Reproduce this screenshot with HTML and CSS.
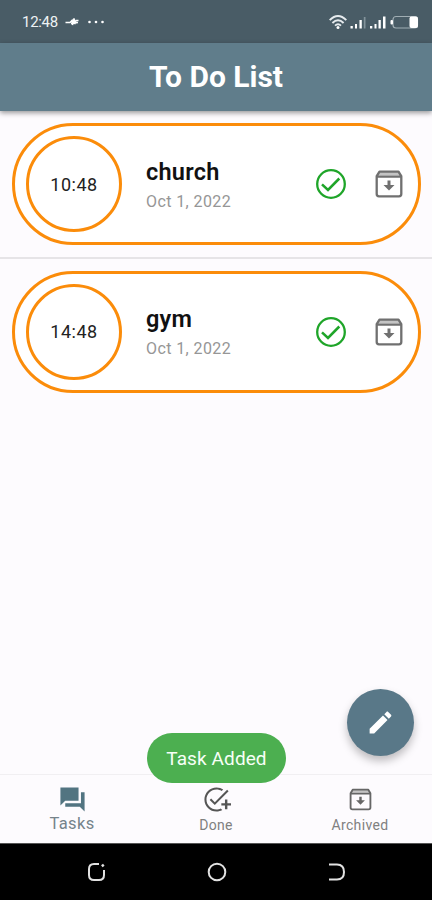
FILE: index.html
```html
<!DOCTYPE html>
<html lang="en">
<head>
<meta charset="utf-8">
<title>To Do List</title>
<link rel="stylesheet" href="styles.css">
</head>
<body>
<svg class="defs" width="0" height="0">
  <symbol id="archive" viewBox="0 0 36 36"><path fill="#c4c4c4" d="M8.500 5.500h19l2.800 4H5.700z"/><path fill="none" stroke="currentColor" stroke-width="2.300" stroke-linejoin="round" d="M5.700 10.200L8.500 5.700h19l2.800 4.500V28q0 2.300-2.300 2.300H8q-2.300 0-2.300-2.300zM5.700 10.700h24.600"/><path fill="currentColor" d="M16.500 14.500h3v4.500h4L18 24.500 12.500 19h4z"/></symbol>
  <symbol id="check" viewBox="0 0 36 36"><circle cx="18" cy="18" r="13.800" fill="none" stroke="currentColor" stroke-width="2.300"/><path fill="none" stroke="currentColor" stroke-width="2.500" d="M9 18.300l6 5.700L26.300 12.500"/></symbol>
</svg>
<div class="phone">
  <div class="status">
    <span class="clock">12:48</span>
    <svg class="pulse" width="15" height="14" viewBox="0 0 15 14"><path d="M0.500 7.500H5L7 5.500 7.500 10 9 3.500 10 9 11 5.500 13.500 5.500M6 8.500L13 7.500"/></svg>
    <svg class="dots" width="16" height="4" viewBox="0 0 16 4"><circle cx="1.500" cy="2" r="1.300"/><circle cx="8" cy="2" r="1.300"/><circle cx="14.500" cy="2" r="1.300"/></svg>
    <svg class="signals" width="90" height="16" viewBox="0 0 90 16">
      <g fill="none" stroke="#e6ebee" stroke-width="1.900"><path d="M.7 6.200Q9 -2.200 17.300 6.200M3.400 9Q9 3.500 14.600 9M6 11.600Q9 9 12 11.600"/></g>
      <circle cx="9" cy="13.500" r="1.500" fill="#fff"/>
      <path fill="#fff" d="M21.500 12h2.300v2.500h-2.300zM26 10h2v4.500h-2zM30.500 6h2.300v8.500h-2.300zM41 12h2.300v2.500h-2.300zM45.500 10h2v4.500h-2zM49.500 6h2.300v8.500h-2.300zM54 2.500h2.500v12H54z"/>
      <path fill="#82929a" d="M34.800 3h1.700v11.500h-1.700z"/>
      <rect x="64" y="2.500" width="24.500" height="11.500" rx="3" fill="none" stroke="#a0adb3" stroke-width="1.200"/><rect x="61.500" y="6" width="2.500" height="4.500" rx="1" fill="#fff"/><rect x="80.500" y="2.500" width="8.500" height="11.500" rx="2" fill="#fff"/>
    </svg>
  </div>
  <header class="appbar"><h1>To Do List</h1></header>
  <main class="list">
    <article class="card">
      <div class="time">10:48</div>
      <div class="info"><h2>church</h2><p>Oct 1, 2022</p></div>
      <svg class="done"><use href="#check"/></svg>
      <svg class="store"><use href="#archive"/></svg>
    </article>
    <hr>
    <article class="card">
      <div class="time">14:48</div>
      <div class="info"><h2>gym</h2><p>Oct 1, 2022</p></div>
      <svg class="done"><use href="#check"/></svg>
      <svg class="store"><use href="#archive"/></svg>
    </article>
  </main>
  <nav class="tabs">
    <div class="tab active"><svg viewBox="0 0 24 24"><path d="M22 6h-3v9H6v3h12l4 4zM17 2H2v15l4-4h11z"/></svg><span>Tasks</span></div>
    <div class="tab"><svg viewBox="0 0 24 24"><path d="M22 5.180L10.590 16.600l-4.240-4.240 1.200-1.200 3.040 3.040 10.200-10.200L22 5.180zM12 20.300c-4.600 0-8.300-3.740-8.300-8.300s3.700-8.300 8.300-8.300c1.570 0 3.040.46 4.280 1.250l1.250-1.250C16.100 2.670 14.130 2 12 2 6.480 2 2 6.480 2 12s4.480 10 10 10c1.730 0 3.360-.44 4.780-1.220l-1.300-1.300c-1 .46-2.310.82-3.480.82zm7-5.300h-3v2h3v3h2v-3h3v-2h-3v-3h-2v3z"/></svg><span>Done</span></div>
    <div class="tab"><svg viewBox="0 0 36 36"><use href="#archive"/></svg><span>Archived</span></div>
  </nav>
  <div class="system">
    <svg viewBox="0 0 20 20"><path d="M12 2H7Q2 2 2 7v6q0 5 5 5h5q5 0 5-5V8"/><path d="M14.800 4.200l2-1.400" stroke-width="2.600"/></svg>
    <svg viewBox="0 0 20 20"><circle cx="10" cy="10" r="8.300"/></svg>
    <svg viewBox="0 0 20 20"><path d="M2 2.500h8q7 0 7 7.500t-7 7.500H2"/></svg>
  </div>
  <div class="fab"><svg viewBox="0 0 24 24"><path d="M3 17.250V21h3.750L17.810 9.940l-3.750-3.750L3 17.250zM20.710 7.040c.39-.39.39-1.020 0-1.410l-2.340-2.340c-.39-.39-1.020-.39-1.410 0l-1.830 1.830 3.750 3.750 1.830-1.830z"/></svg></div>
  <div class="toast">Task Added</div>
</div>
</body>
</html>
```
FILE: styles.css
```css
* { box-sizing: border-box; }
body { margin: 0; font-family: Roboto, "Liberation Sans", sans-serif; }
h1, h2, p { margin: 0; }
.defs { position: absolute; }
.phone { position: relative; width: 432px; height: 900px; display: flex; flex-direction: column; background: #fdfbfe; overflow: hidden; }
.status { height: 43px; flex: none; display: flex; align-items: center; padding: 1px 13px 0 22px; background: #495c66; color: #eef2f4; }
.clock { font-size: 15px; width: 36px; letter-spacing: -.3px; }
.pulse { margin-left: 7px; fill: none; stroke: #fff; stroke-width: 1.5; }
.dots { margin-left: 8px; fill: #fff; }
.signals { margin-left: auto; }
.appbar { height: 68px; flex: none; display: flex; justify-content: center; align-items: center; background: #607d8b; color: #fff; box-shadow: 0 2px 5px rgba(0, 0, 0, .4); z-index: 1; }
.appbar h1 { font-size: 30px; font-weight: 700; line-height: 34px; letter-spacing: 0; }
.list { flex: 1; padding-top: 12px; }
.card { height: 122px; margin: 0 11px 0 12px; padding: 0 11.500px 0 11px; display: flex; align-items: center; border: 3px solid #fb8c0a; border-radius: 61px; background: #fff; }
.time { width: 96px; height: 96px; flex: none; display: flex; align-items: center; justify-content: center; border: 3px solid #fb8c0a; border-radius: 50%; font-size: 18px; color: #222; letter-spacing: .5px; }
.info { margin-left: 24px; flex: 1; }
.info h2 { font-size: 23.500px; line-height: 30px; font-weight: 600; color: #111; letter-spacing: .25px; }
.info p { margin-top: 5px; font-size: 16px; line-height: 20px; color: #969696; letter-spacing: .4px; }
.done { width: 36px; height: 36px; color: #1fa529; }
.store { width: 36px; height: 36px; margin-left: 22px; color: #707070; }
hr { margin: 12px 0; border: 0; height: 1.500px; background: #e6e4e7; }
.tabs { height: 69px; flex: none; display: flex; border-top: 1px solid #f1eff2; padding-top: 10px; color: #808080; }
.tab { flex: 1; display: flex; flex-direction: column; align-items: center; font-size: 14px; }
.tab svg { width: 29px; height: 29px; fill: #555; color: #666; }
.tab span { line-height: 20px; letter-spacing: .35px; margin-top: 1px; }
.tab.active { font-size: 16.500px; color: #75838b; }
.tab.active svg { fill: #527481; }
.tab.active span { margin-top: 0; }
.system { height: 57px; flex: none; display: flex; justify-content: center; align-items: center; gap: 100px; padding-left: 1px; background: #000; border-top: 1px solid #555; }
.system svg { width: 20px; height: 20px; fill: none; stroke: #e2e2e2; stroke-width: 2; }
.fab { position: absolute; left: 346.500px; top: 689px; width: 67px; height: 67px; border-radius: 50%; background: #597888; display: flex; align-items: center; justify-content: center; box-shadow: 0 5px 8px rgba(0, 0, 0, .25); }
.fab svg { width: 29px; height: 29px; fill: #fff; }
.toast { position: absolute; left: 147px; top: 733px; width: 139px; height: 50px; border-radius: 25px; background: #4caf50; color: #f7fff7; display: flex; align-items: center; justify-content: center; font-size: 19px; letter-spacing: .1px; }
```
